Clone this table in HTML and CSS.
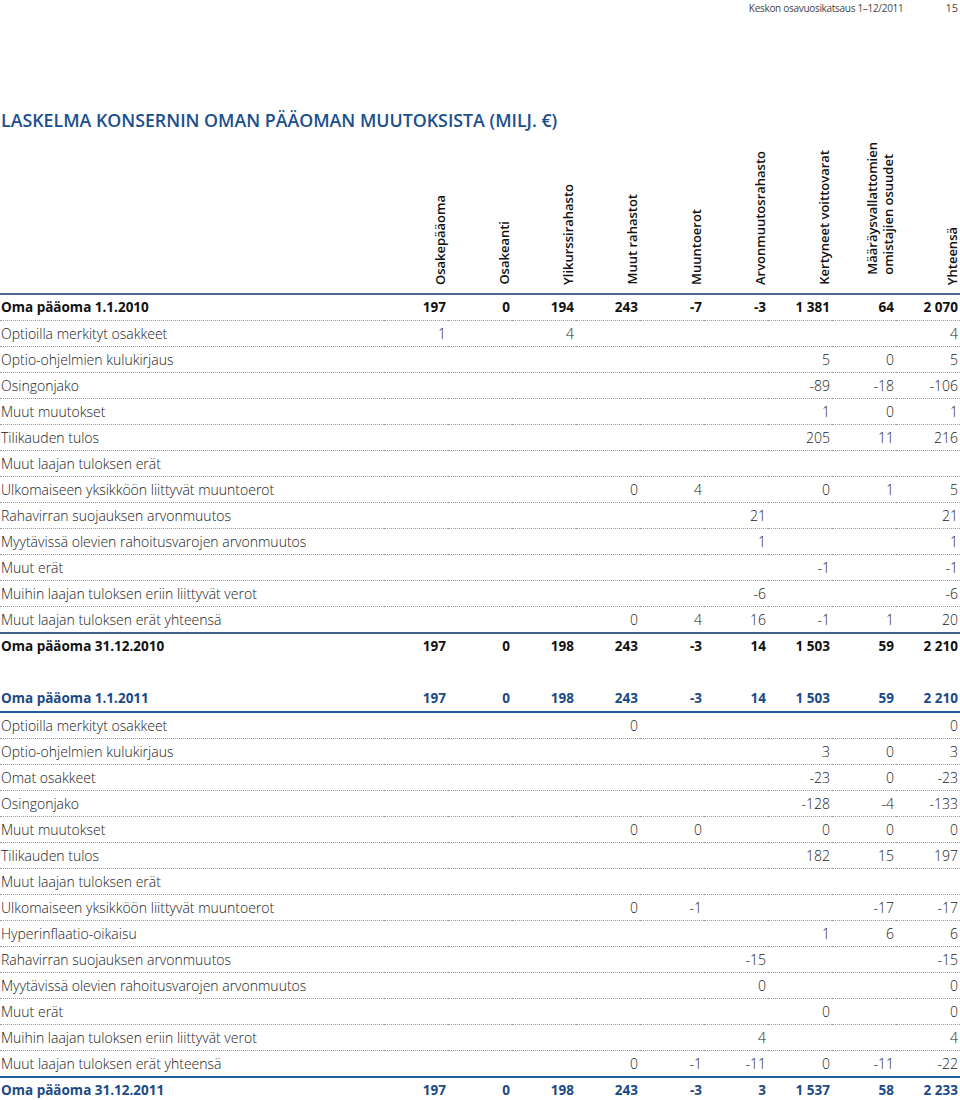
FILE: index.html
```html
<!DOCTYPE html>
<html lang="fi">
<head>
<meta charset="utf-8">
<title>Laskelma konsernin oman pääoman muutoksista</title>
<link rel="stylesheet" href="styles.css">
</head>
<body>
<div class="top"><span>Keskon osavuosikatsaus 1–12/2011</span><span class="page-num">15</span></div>
<h1 class="title">LASKELMA KONSERNIN OMAN PÄÄOMAN MUUTOKSISTA (MILJ. €)</h1>
<table class="eq">
<colgroup>
<col class="c-label"><col class="c-num"><col class="c-num"><col class="c-num"><col class="c-num"><col class="c-num"><col class="c-num"><col class="c-num"><col class="c-num"><col class="c-num">
</colgroup>
<thead>
<tr>
<th class="blank"></th>
<th class="rot"><span class="vt">Osakepääoma</span></th>
<th class="rot"><span class="vt">Osakeanti</span></th>
<th class="rot"><span class="vt">Ylikurssirahasto</span></th>
<th class="rot"><span class="vt">Muut rahastot</span></th>
<th class="rot"><span class="vt">Muuntoerot</span></th>
<th class="rot"><span class="vt">Arvonmuutosrahasto</span></th>
<th class="rot"><span class="vt">Kertyneet voittovarat</span></th>
<th class="rot"><span class="vt vt-two">Määräysvallattomien<br>omistajien osuudet</span></th>
<th class="rot"><span class="vt">Yhteensä</span></th>
</tr>
</thead>
<tbody>
<tr class="total"><td class="l">Oma pääoma 1.1.2010</td><td>197</td><td>0</td><td>194</td><td>243</td><td>-7</td><td>-3</td><td>1 381</td><td>64</td><td>2 070</td></tr>
<tr><td class="l">Optioilla merkityt osakkeet</td><td>1</td><td></td><td>4</td><td></td><td></td><td></td><td></td><td></td><td>4</td></tr>
<tr><td class="l">Optio-ohjelmien kulukirjaus</td><td></td><td></td><td></td><td></td><td></td><td></td><td>5</td><td>0</td><td>5</td></tr>
<tr><td class="l">Osingonjako</td><td></td><td></td><td></td><td></td><td></td><td></td><td>-89</td><td>-18</td><td>-106</td></tr>
<tr><td class="l">Muut muutokset</td><td></td><td></td><td></td><td></td><td></td><td></td><td>1</td><td>0</td><td>1</td></tr>
<tr><td class="l">Tilikauden tulos</td><td></td><td></td><td></td><td></td><td></td><td></td><td>205</td><td>11</td><td>216</td></tr>
<tr><td class="l">Muut laajan tuloksen erät</td><td></td><td></td><td></td><td></td><td></td><td></td><td></td><td></td><td></td></tr>
<tr><td class="l">Ulkomaiseen yksikköön liittyvät muuntoerot</td><td></td><td></td><td></td><td>0</td><td>4</td><td></td><td>0</td><td>1</td><td>5</td></tr>
<tr><td class="l">Rahavirran suojauksen arvonmuutos</td><td></td><td></td><td></td><td></td><td></td><td>21</td><td></td><td></td><td>21</td></tr>
<tr><td class="l">Myytävissä olevien rahoitusvarojen arvonmuutos</td><td></td><td></td><td></td><td></td><td></td><td>1</td><td></td><td></td><td>1</td></tr>
<tr><td class="l">Muut erät</td><td></td><td></td><td></td><td></td><td></td><td></td><td>-1</td><td></td><td>-1</td></tr>
<tr><td class="l">Muihin laajan tuloksen eriin liittyvät verot</td><td></td><td></td><td></td><td></td><td></td><td>-6</td><td></td><td></td><td>-6</td></tr>
<tr class="sub-2010"><td class="l">Muut laajan tuloksen erät yhteensä</td><td></td><td></td><td></td><td>0</td><td>4</td><td>16</td><td>-1</td><td>1</td><td>20</td></tr>
<tr class="total end"><td class="l">Oma pääoma 31.12.2010</td><td>197</td><td>0</td><td>198</td><td>243</td><td>-3</td><td>14</td><td>1 503</td><td>59</td><td>2 210</td></tr>
<tr class="gap"><td colspan="10"></td></tr>
<tr class="total blue open-2011"><td class="l">Oma pääoma 1.1.2011</td><td>197</td><td>0</td><td>198</td><td>243</td><td>-3</td><td>14</td><td>1 503</td><td>59</td><td>2 210</td></tr>
<tr><td class="l">Optioilla merkityt osakkeet</td><td></td><td></td><td></td><td>0</td><td></td><td></td><td></td><td></td><td>0</td></tr>
<tr><td class="l">Optio-ohjelmien kulukirjaus</td><td></td><td></td><td></td><td></td><td></td><td></td><td>3</td><td>0</td><td>3</td></tr>
<tr><td class="l">Omat osakkeet</td><td></td><td></td><td></td><td></td><td></td><td></td><td>-23</td><td>0</td><td>-23</td></tr>
<tr><td class="l">Osingonjako</td><td></td><td></td><td></td><td></td><td></td><td></td><td>-128</td><td>-4</td><td>-133</td></tr>
<tr><td class="l">Muut muutokset</td><td></td><td></td><td></td><td>0</td><td>0</td><td></td><td>0</td><td>0</td><td>0</td></tr>
<tr><td class="l">Tilikauden tulos</td><td></td><td></td><td></td><td></td><td></td><td></td><td>182</td><td>15</td><td>197</td></tr>
<tr><td class="l">Muut laajan tuloksen erät</td><td></td><td></td><td></td><td></td><td></td><td></td><td></td><td></td><td></td></tr>
<tr><td class="l">Ulkomaiseen yksikköön liittyvät muuntoerot</td><td></td><td></td><td></td><td>0</td><td>-1</td><td></td><td></td><td>-17</td><td>-17</td></tr>
<tr><td class="l">Hyperinflaatio-oikaisu</td><td></td><td></td><td></td><td></td><td></td><td></td><td>1</td><td>6</td><td>6</td></tr>
<tr><td class="l">Rahavirran suojauksen arvonmuutos</td><td></td><td></td><td></td><td></td><td></td><td>-15</td><td></td><td></td><td>-15</td></tr>
<tr><td class="l">Myytävissä olevien rahoitusvarojen arvonmuutos</td><td></td><td></td><td></td><td></td><td></td><td>0</td><td></td><td></td><td>0</td></tr>
<tr><td class="l">Muut erät</td><td></td><td></td><td></td><td></td><td></td><td></td><td>0</td><td></td><td>0</td></tr>
<tr><td class="l">Muihin laajan tuloksen eriin liittyvät verot</td><td></td><td></td><td></td><td></td><td></td><td>4</td><td></td><td></td><td>4</td></tr>
<tr class="sub-2011"><td class="l">Muut laajan tuloksen erät yhteensä</td><td></td><td></td><td></td><td>0</td><td>-1</td><td>-11</td><td>0</td><td>-11</td><td>-22</td></tr>
<tr class="total blue end"><td class="l">Oma pääoma 31.12.2011</td><td>197</td><td>0</td><td>198</td><td>243</td><td>-3</td><td>3</td><td>1 537</td><td>58</td><td>2 233</td></tr>
</tbody>
</table>
</body>
</html>
```
FILE: styles.css
```css
html, body {
  margin: 0;
  padding: 0;
  background: #fff;
}
body {
  font-family: "Open Sans", "Liberation Sans", sans-serif;
  color: #222;
  width: 960px;
}
.top {
  display: flex;
  justify-content: flex-end;
  font-size: 10px;
  letter-spacing: -0.3px;
  line-height: 14px;
  color: #444;
  padding: 1px 2px 0 0;
  height: 16px;
  box-sizing: border-box;
}
.page-num {
  margin-left: 42px;
  font-size: 11px;
  letter-spacing: 0;
}
.title {
  font-size: 17.8px;
  font-weight: 600;
  line-height: 22px;
  color: #1b4f8c;
  margin: 93px 0 0 1px;
}
.eq {
  border-collapse: collapse;
  table-layout: fixed;
  width: 960px;
}
.c-label { width: 384px; }
.c-num { width: 64px; }
.eq thead th {
  height: 159px;
  padding: 0 0 3px 0;
  vertical-align: bottom;
  text-align: right;
  border-bottom: 2px solid #4a6890;
}
.vt {
  display: inline-block;
  writing-mode: vertical-rl;
  transform: rotate(180deg);
  font-size: 13px;
  font-weight: 600;
  line-height: 16px;
  color: #111;
  text-align: left;
  white-space: nowrap;
}
.vt-two {
  margin-bottom: 10px;
}
.eq td {
  height: 25px;
  padding: 0 2px 0 0;
  font-size: 14px;
  font-weight: 300;
  line-height: 25px;
  text-align: right;
  white-space: nowrap;
  color: #1a1a1a;
  border-bottom: 1px dotted #999;
}
.eq td.l {
  text-align: left;
  padding: 0 0 0 1px;
}
.eq tr.total td {
  font-size: 13.5px;
  font-weight: 700;
  color: #111;
}
.eq tr.total.blue td {
  color: #1a4a86;
}
.eq tr.sub-2010 td {
  border-bottom: 2px solid #3f6189;
}
.eq tr.open-2011 td,
.eq tr.sub-2011 td {
  border-bottom: 2px solid #1f5d9e;
}
.eq tr.end td,
.eq tr.gap td {
  border-bottom: none;
}
.eq tr.gap td {
  height: 27px;
}
```
